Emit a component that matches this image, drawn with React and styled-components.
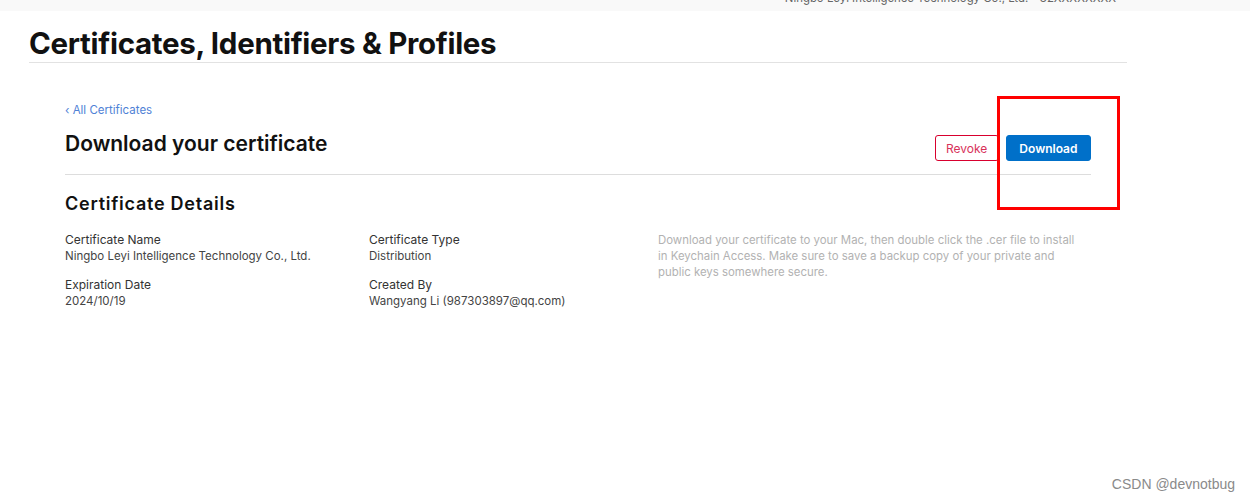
import React from "react";
import styled, { createGlobalStyle } from "styled-components";

const Global = createGlobalStyle`
  html, body { margin: 0; padding: 0; background: #fff; }
  body { font-family: Inter, "Noto Sans", sans-serif; color: #111; width: 1250px; height: 501px; overflow: hidden; position: relative; }
  * { box-sizing: border-box; }
`;

const TopBar = styled.div`
  height: 11px;
  background: #f9f9f9;
  overflow: hidden;
  display: flex;
  justify-content: flex-end;
  padding-right: 134px;
`;

const TopText = styled.div`
  font-size: 11.4px;
  line-height: 12px;
  color: #666;
  margin-top: -8px;
  white-space: nowrap;
`;

const Header = styled.div`
  margin: 0 123px 0 29px;
  padding-top: 15px;
  padding-bottom: 2px;
  border-bottom: 1px solid #e2e2e2;
`;

const PageTitle = styled.h1`
  margin: 0;
  font-size: 29.5px;
  line-height: 34px;
  font-weight: 700;
  letter-spacing: -0.3px;
  color: #111;
`;

const Content = styled.div`
  margin: 0 159px 0 65px;
  padding-top: 39px;
`;

const BackLink = styled.a`
  font-size: 11.5px;
  line-height: 16px;
  color: #4f82d6;
  text-decoration: none;
  display: block;
`;

const TitleRow = styled.div`
  display: flex;
  align-items: flex-start;
  justify-content: space-between;
  padding: 11px 0 13px;
  border-bottom: 1px solid #ddd;
`;

const SubTitle = styled.h2`
  margin: 0;
  font-size: 21px;
  line-height: 30px;
  font-weight: 600;
  color: #111;
`;

const Buttons = styled.div`
  display: flex;
  gap: 7px;
  margin-top: 6px;
`;

const Button = styled.button`
  font-family: inherit;
  font-size: 12px;
  height: 26px;
  border-radius: 3px;
  padding: 0 ${(p) => (p.$primary ? "12.5px" : "10.5px")};
  border: 1px solid ${(p) => (p.$primary ? "#0070c9" : "#d8002e")};
  background: ${(p) => (p.$primary ? "#0070c9" : "#fff")};
  color: ${(p) => (p.$primary ? "#fff" : "#d8325a")};
  font-weight: ${(p) => (p.$primary ? 600 : 400)};
  cursor: pointer;
`;

const SectionTitle = styled.h3`
  margin: 18px 0 0;
  font-size: 18px;
  line-height: 22px;
  font-weight: 600;
  letter-spacing: 0.75px;
  color: #111;
`;

const Details = styled.div`
  display: grid;
  grid-template-columns: 304px 289px 1fr;
  margin-top: 17px;
`;

const Column = styled.div`
  display: flex;
  flex-direction: column;
  gap: 12px;
`;

const Field = styled.div`
  display: flex;
  flex-direction: column;
`;

const Label = styled.div`
  font-size: 12px;
  line-height: 16px;
  color: #333;
`;

const Value = styled.div`
  font-size: 11.5px;
  line-height: 17px;
  color: #444;
`;

const Note = styled.p`
  margin: 0;
  font-size: 11.4px;
  line-height: 16px;
  color: #b2b2b2;
  max-width: 424px;
`;

const Highlight = styled.div`
  position: absolute;
  left: 997px;
  top: 96px;
  width: 123px;
  height: 114px;
  border: 3px solid #ff0000;
  pointer-events: none;
`;

const Watermark = styled.div`
  position: absolute;
  right: 15px;
  bottom: 9px;
  font-family: "Liberation Sans", Arial, sans-serif;
  font-size: 14px;
  color: #8a8a8a;
`;

export default function App() {
  return (
    <>
      <Global />
      <TopBar>
        <TopText>Ningbo Leyi Intelligence Technology Co., Ltd. - 32XXXXXXXX</TopText>
      </TopBar>
      <Header>
        <PageTitle>Certificates, Identifiers &amp; Profiles</PageTitle>
      </Header>
      <Content>
        <BackLink href="#">‹ All Certificates</BackLink>
        <TitleRow>
          <SubTitle>Download your certificate</SubTitle>
          <Buttons>
            <Button>Revoke</Button>
            <Button $primary>Download</Button>
          </Buttons>
        </TitleRow>
        <SectionTitle>Certificate Details</SectionTitle>
        <Details>
          <Column>
            <Field>
              <Label>Certificate Name</Label>
              <Value>Ningbo Leyi Intelligence Technology Co., Ltd.</Value>
            </Field>
            <Field>
              <Label>Expiration Date</Label>
              <Value>2024/10/19</Value>
            </Field>
          </Column>
          <Column>
            <Field>
              <Label>Certificate Type</Label>
              <Value>Distribution</Value>
            </Field>
            <Field>
              <Label>Created By</Label>
              <Value>Wangyang Li (987303897@qq.com)</Value>
            </Field>
          </Column>
          <Note>
            Download your certificate to your Mac, then double click the .cer file to install in Keychain Access. Make sure to save a backup copy of your private and public keys somewhere secure.
          </Note>
        </Details>
      </Content>
      <Highlight />
      <Watermark>CSDN @devnotbug</Watermark>
    </>
  );
}
